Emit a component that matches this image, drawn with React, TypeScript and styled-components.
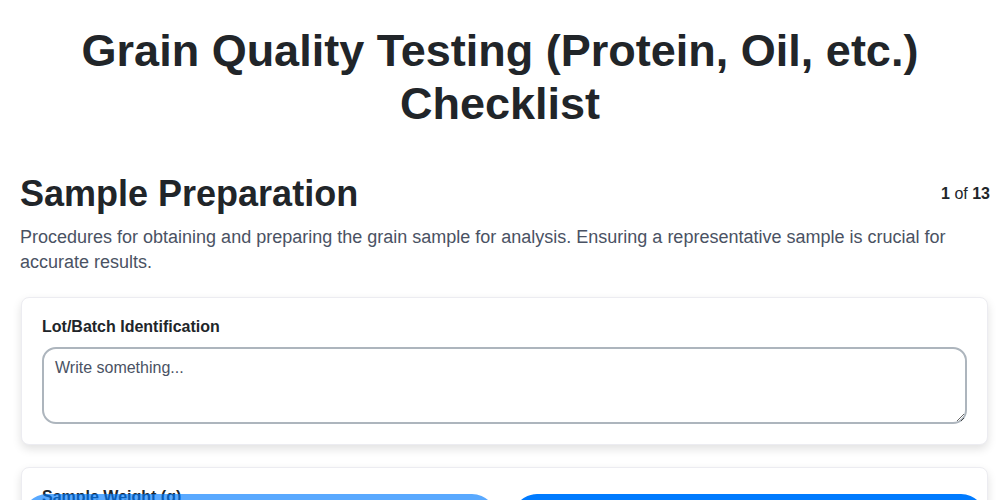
import React from "react";
import styled, { createGlobalStyle } from "styled-components";

const GlobalStyle = createGlobalStyle`
  body {
    margin: 0;
    background: #ffffff;
    font-family: "Liberation Sans", Arial, sans-serif;
    color: #212529;
  }
`;

const Page = styled.div`
  padding: 24px 10px 80px 20px;
`;

const Title = styled.h1`
  margin: 0 10px 43px 0;
  text-align: center;
  font-size: 45px;
  line-height: 53px;
  font-weight: 700;
  color: #212529;
`;

const SectionHead = styled.div`
  display: flex;
  justify-content: space-between;
  align-items: center;
`;

const SectionTitle = styled.h2`
  margin: 0;
  font-size: 36px;
  line-height: 42px;
  font-weight: 700;
  color: #212529;
`;

const Counter = styled.span`
  font-size: 16px;
  color: #212529;

  b {
    font-weight: 700;
  }
`;

const Description = styled.p`
  margin: 10px 0 22px;
  font-size: 18px;
  line-height: 25px;
  color: #4a5263;
`;

const Card = styled.div`
  margin: 0 2px 22px 1px;
  padding: 20px;
  background: #ffffff;
  border: 1px solid #ececf1;
  border-radius: 8px;
  box-shadow: 0 4px 10px rgba(0, 0, 0, 0.12);
`;

const Label = styled.label`
  display: block;
  margin-bottom: 11px;
  font-size: 16px;
  line-height: 18px;
  font-weight: 700;
  color: #212529;
`;

const TextArea = styled.textarea`
  display: block;
  box-sizing: border-box;
  width: 100%;
  height: 77px;
  padding: 10px 11px;
  border: 2px solid #adb5bd;
  border-radius: 14px;
  font-family: "Liberation Sans", Arial, sans-serif;
  font-size: 16px;
  color: #212529;
  outline: none;

  &::placeholder {
    color: #4a5263;
  }
`;

const Footer = styled.div`
  position: fixed;
  top: 494px;
  left: 22px;
  right: 14px;
  display: flex;
  gap: 15px;
`;

const NavButton = styled.button<{ $disabled?: boolean }>`
  flex: 1;
  height: 50px;
  border: none;
  border-radius: 25px;
  background: #007bff;
  opacity: ${(p) => (p.$disabled ? 0.65 : 1)};
  color: #ffffff;
  font-family: "Liberation Sans", Arial, sans-serif;
  font-size: 16px;
`;

export default function App() {
  return (
    <>
      <GlobalStyle />
      <Page>
        <Title>Grain Quality Testing (Protein, Oil, etc.) Checklist</Title>
        <SectionHead>
          <SectionTitle>Sample Preparation</SectionTitle>
          <Counter>
            <b>1</b> of <b>13</b>
          </Counter>
        </SectionHead>
        <Description>
          Procedures for obtaining and preparing the grain sample for analysis. Ensuring a
          representative sample is crucial for accurate results.
        </Description>
        <Card>
          <Label>Lot/Batch Identification</Label>
          <TextArea placeholder="Write something..." />
        </Card>
        <Card>
          <Label>Sample Weight (g)</Label>
          <TextArea placeholder="Write something..." />
        </Card>
      </Page>
      <Footer>
        <NavButton $disabled>Previous</NavButton>
        <NavButton>Next</NavButton>
      </Footer>
    </>
  );
}
